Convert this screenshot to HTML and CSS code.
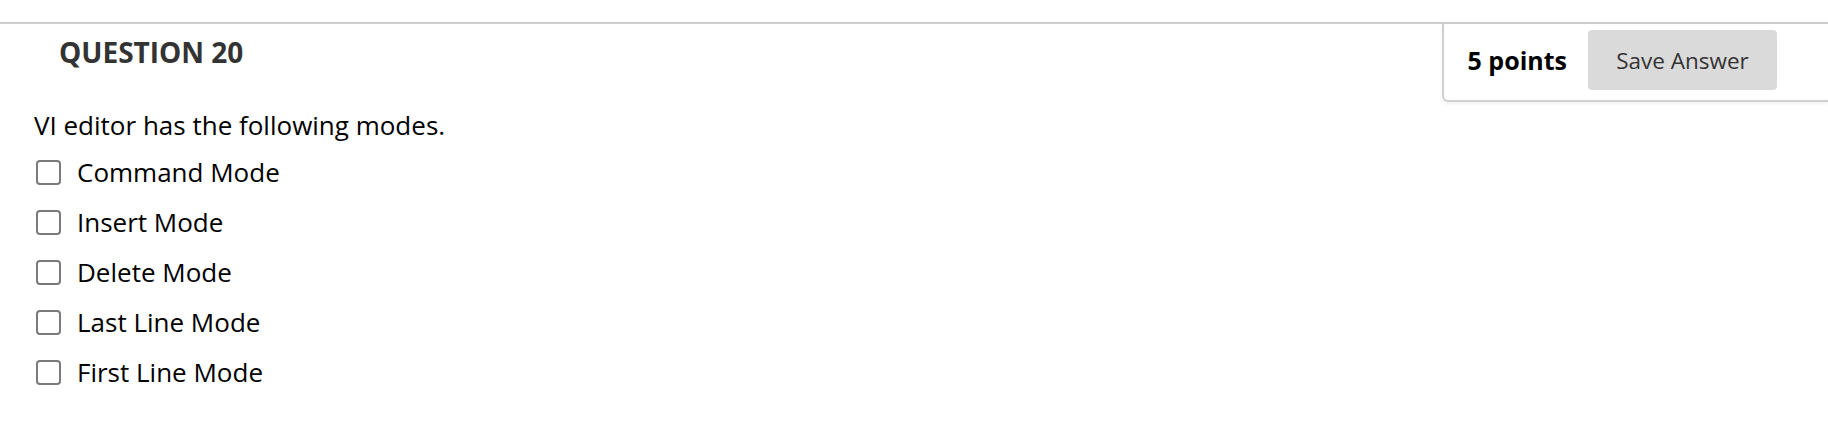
FILE: index.html
```html
<!DOCTYPE html>
<html lang="en">
<head>
<meta charset="utf-8">
<title>Question 20</title>
<link rel="stylesheet" href="styles.css">
</head>
<body>
<div class="page">
  <div class="question-header">
    <h3 class="question-title">QUESTION 20</h3>
    <div class="points-panel">
      <span class="points">5 points</span>
      <button class="save-btn" type="button">Save Answer</button>
    </div>
  </div>
  <div class="question-body">
    <p class="prompt">VI editor has the following modes.</p>
    <ul class="options">
      <li class="option"><span class="box"></span><span class="label">Command Mode</span></li>
      <li class="option"><span class="box"></span><span class="label">Insert Mode</span></li>
      <li class="option"><span class="box"></span><span class="label">Delete Mode</span></li>
      <li class="option"><span class="box"></span><span class="label">Last Line Mode</span></li>
      <li class="option"><span class="box"></span><span class="label">First Line Mode</span></li>
    </ul>
  </div>
</div>
</body>
</html>
```
FILE: styles.css
```css
html, body {
  margin: 0;
  padding: 0;
  background: #ffffff;
}

body {
  font-family: "Open Sans", "Liberation Sans", sans-serif;
  color: #000;
}

.page {
  padding-top: 22px;
}

.question-header {
  display: flex;
  justify-content: space-between;
  align-items: flex-start;
  border-top: 2px solid #cdcdcd;
}

.question-title {
  margin: 0;
  padding: 8px 0 0 59px;
  font-size: 28px;
  line-height: 40px;
  font-weight: 700;
  color: #333;
}

.points-panel {
  display: flex;
  align-items: center;
  gap: 21px;
  padding: 6px 51px 10px 24px;
  border-left: 2px solid #cfcfcf;
  border-bottom: 2px solid #cfcfcf;
  border-bottom-left-radius: 6px;
  box-shadow: 0 2px 4px rgba(0, 0, 0, 0.06);
}

.points {
  font-size: 25px;
  font-weight: 700;
  color: #000;
}

.save-btn {
  width: 189px;
  height: 60px;
  border: 0;
  border-radius: 4px;
  background: #dadada;
  color: #333;
  font-family: "Open Sans", "Liberation Sans", sans-serif;
  font-size: 22.5px;
  padding: 0;
}

.question-body {
  padding-left: 34px;
}

.prompt {
  margin: 0;
  margin-top: 6px;
  font-size: 26px;
  line-height: 34px;
}

.options {
  list-style: none;
  margin: 5px 0 0 0;
  padding: 0;
}

.option {
  display: flex;
  align-items: center;
  height: 50px;
}

.box {
  box-sizing: border-box;
  width: 25px;
  height: 25px;
  margin-left: 2px;
  margin-top: 1px;
  border: 2px solid #7a7a7a;
  border-radius: 4px;
  background: #fff;
}

.label {
  margin-left: 16px;
  font-size: 26px;
  line-height: 50px;
}
```
